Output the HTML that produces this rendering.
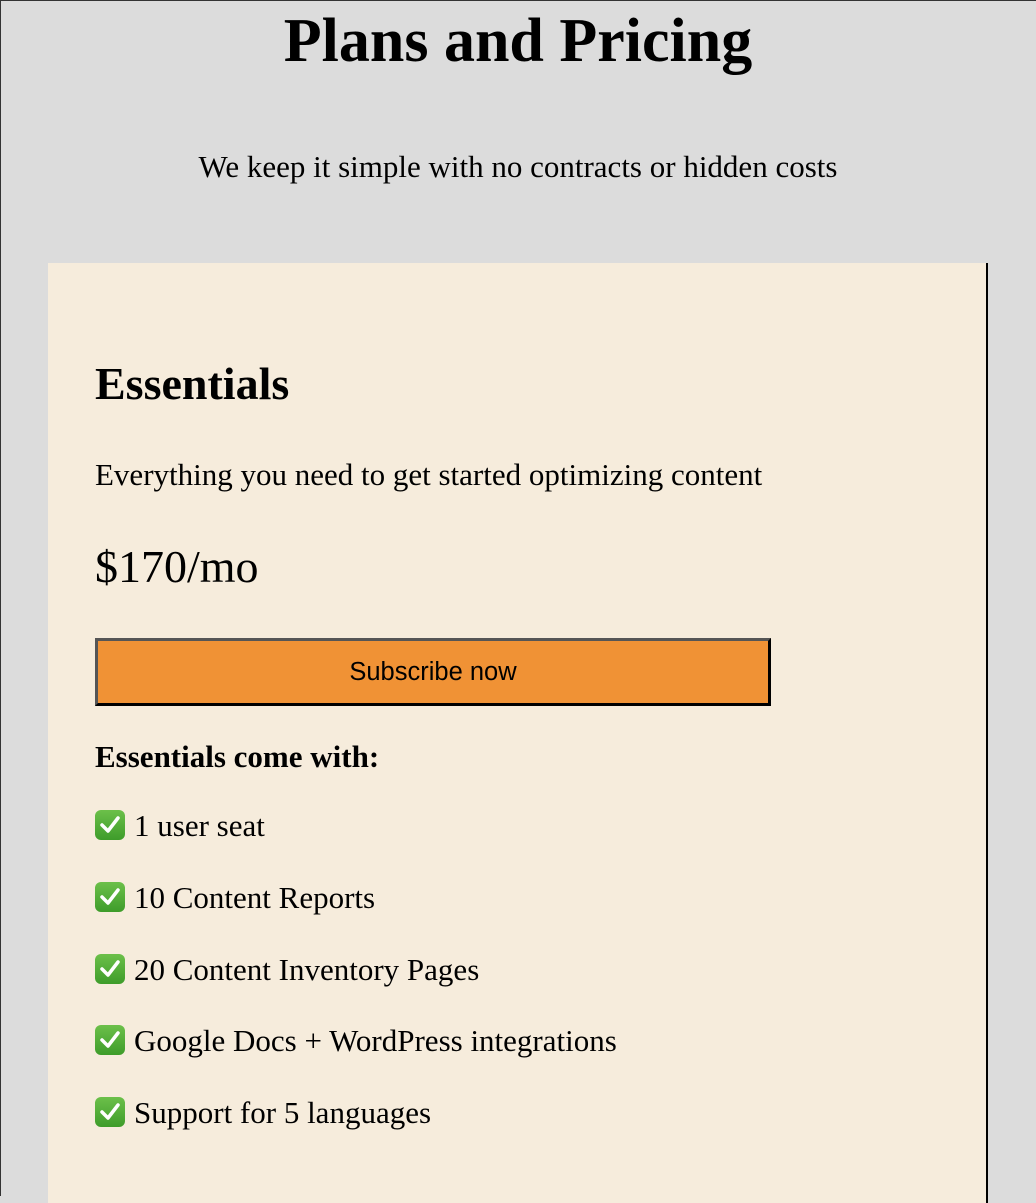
<!DOCTYPE html>
<html><head><meta charset="utf-8"><style>
html,body{margin:0;padding:0;width:1036px;height:1196px;overflow:hidden;background:#dcdcdc;font-family:"Liberation Serif",serif;color:#000}
.frame{position:absolute;left:0;top:0;width:1036px;height:1196px;border-left:1px solid #333;border-top:1px solid #333;box-sizing:border-box}
.a{position:absolute;white-space:nowrap;line-height:1}
h1{margin:0;font-size:62px;font-weight:bold}
.card{position:absolute;left:48px;top:263px;width:938px;height:940px;background:#f6ecdc;border-right:2px solid #000}
.btn{position:absolute;left:95px;top:638px;width:676px;height:68px;box-sizing:border-box;background:#f09235;border:3px solid;border-color:#555 #000 #000 #555;font-family:"Liberation Sans",sans-serif;font-size:25.5px;text-align:center;line-height:62px}
.chk{display:inline-block;width:30px;height:30px;border-radius:6px;background:linear-gradient(#6cc04a,#3e9c2a);vertical-align:-4px;margin-right:9px;position:relative}
.chk svg{position:absolute;left:3px;top:3px}
.li{font-size:31px;left:95px}
</style></head><body>
<div class="frame"></div>
<div class="a" style="left:0;width:1036px;text-align:center;top:10px"><h1>Plans and Pricing</h1></div>
<div class="a" style="left:0;width:1036px;text-align:center;top:151px;font-size:31px">We keep it simple with no contracts or hidden costs</div>
<div class="card"></div>
<div class="a" style="left:95px;top:361px;font-size:46px;font-weight:bold">Essentials</div>
<div class="a" style="left:95px;top:459px;font-size:31px">Everything you need to get started optimizing content</div>
<div class="a" style="left:95px;top:544px;font-size:46px">$170/mo</div>
<div class="btn">Subscribe now</div>
<div class="a" style="left:95px;top:741px;font-size:31px;font-weight:bold">Essentials come with:</div>
<div class="a li" style="top:810px"><span class="chk"><svg width="24" height="24" viewBox="0 0 24 24"><path d="M4 12 L10 18 L20 5" stroke="#fff" stroke-width="3.5" fill="none" stroke-linecap="round" stroke-linejoin="round"/></svg></span>1 user seat</div>
<div class="a li" style="top:882px"><span class="chk"><svg width="24" height="24" viewBox="0 0 24 24"><path d="M4 12 L10 18 L20 5" stroke="#fff" stroke-width="3.5" fill="none" stroke-linecap="round" stroke-linejoin="round"/></svg></span>10 Content Reports</div>
<div class="a li" style="top:954px"><span class="chk"><svg width="24" height="24" viewBox="0 0 24 24"><path d="M4 12 L10 18 L20 5" stroke="#fff" stroke-width="3.5" fill="none" stroke-linecap="round" stroke-linejoin="round"/></svg></span>20 Content Inventory Pages</div>
<div class="a li" style="top:1025px"><span class="chk"><svg width="24" height="24" viewBox="0 0 24 24"><path d="M4 12 L10 18 L20 5" stroke="#fff" stroke-width="3.5" fill="none" stroke-linecap="round" stroke-linejoin="round"/></svg></span>Google Docs + WordPress integrations</div>
<div class="a li" style="top:1097px"><span class="chk"><svg width="24" height="24" viewBox="0 0 24 24"><path d="M4 12 L10 18 L20 5" stroke="#fff" stroke-width="3.5" fill="none" stroke-linecap="round" stroke-linejoin="round"/></svg></span>Support for 5 languages</div>
</body></html>
